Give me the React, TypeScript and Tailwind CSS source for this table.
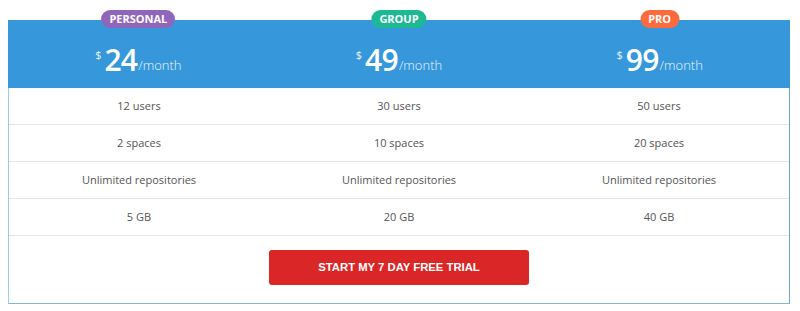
import React from "react";

type Plan = {
  name: string;
  badge: string;
  price: number;
  features: string[];
};

const plans: Plan[] = [
  { name: "PERSONAL", badge: "bg-[#9066bd]", price: 24, features: ["12 users", "2 spaces", "Unlimited repositories", "5 GB"] },
  { name: "GROUP", badge: "bg-[#1db894]", price: 49, features: ["30 users", "10 spaces", "Unlimited repositories", "20 GB"] },
  { name: "PRO", badge: "bg-[#ff6a3c]", price: 99, features: ["50 users", "20 spaces", "Unlimited repositories", "40 GB"] },
];

export default function App() {
  return (
    <div className="w-[800px] h-[311px] bg-white pt-5 pl-2" style={{ fontFamily: '"Open Sans", sans-serif' }}>
      <div className="w-[782px] h-[284px] border-l border-l-[#9fcbe6] border-r border-r-[#6fa8c2] border-b border-b-[#80b9d4] flex flex-col">
        {/* prix */}
        <div className="grid grid-cols-3 h-[68px] bg-[#3698db] -mx-px">
          {plans.map(p => (
            <div key={p.name} className="relative flex items-start justify-center pt-[25px] text-white">
              <span
                className={`absolute left-1/2 -translate-x-1/2 -top-[10px] h-[18px] px-2 rounded-full ${p.badge} text-[11px] font-bold leading-[18px]`}
              >
                {p.name}
              </span>
              <span className="text-[11px] leading-none mt-[4px] mr-[3px] opacity-90">$</span>
              <span className="text-[30px] font-semibold leading-[30px] tracking-tight">{p.price}</span>
              <span className="text-[13px] font-light leading-none mt-[14px] ml-[1px] opacity-90">/month</span>
            </div>
          ))}
        </div>

        {/* lignes des fonctionnalités */}
        {[0, 1, 2, 3].map(i => (
          <div key={i} className="grid grid-cols-3 h-[37px] border-b border-[#e6e6e6] text-[11px] text-[#555]">
            {plans.map(p => (
              <div key={p.name} className="flex items-center justify-center">
                {p.features[i]}
              </div>
            ))}
          </div>
        ))}

        <div className="flex justify-center pt-[14px]">
          <button
            type="button"
            className="w-[260px] h-[35px] rounded-[3px] bg-[#da2626] text-white text-[11.3px] font-bold"
            style={{ fontFamily: '"Liberation Sans", Arial, sans-serif' }}
          >
            START MY 7 DAY FREE TRIAL
          </button>
        </div>
      </div>
    </div>
  );
}
